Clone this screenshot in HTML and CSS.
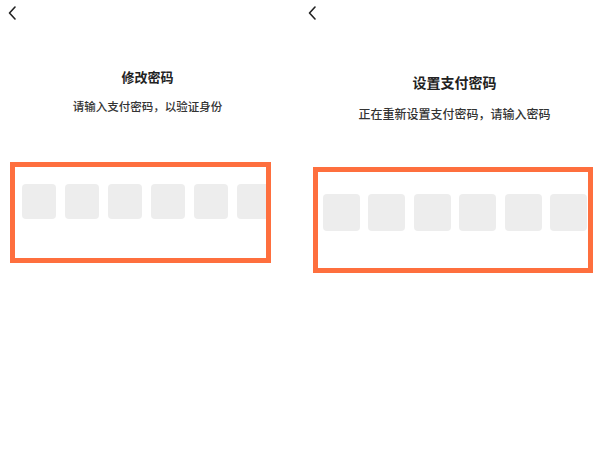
FILE: index.html
```html
<!DOCTYPE html>
<html lang="zh-CN">
<head>
<meta charset="utf-8">
<title>支付密码</title>
<link rel="stylesheet" href="styles.css">
</head>
<body>
<div class="screens">
  <section class="panel panel-verify">
    <svg class="back" width="10" height="14" viewBox="0 0 10 14"><path d="M7 1 L1.5 7 L7 13" fill="none" stroke="#222" stroke-width="1.6" stroke-linecap="round" stroke-linejoin="round"/></svg>
    <div class="head">
      <h1 class="title">修改密码</h1>
      <p class="sub">请输入支付密码，以验证身份</p>
    </div>
    <div class="box">
      <div class="cells">
        <span class="cell"></span><span class="cell"></span><span class="cell"></span><span class="cell"></span><span class="cell"></span><span class="cell"></span>
      </div>
    </div>
  </section>
  <section class="panel panel-reset">
    <svg class="back" width="10" height="14" viewBox="0 0 10 14"><path d="M7 1 L1.5 7 L7 13" fill="none" stroke="#222" stroke-width="1.6" stroke-linecap="round" stroke-linejoin="round"/></svg>
    <div class="head">
      <h1 class="title">设置支付密码</h1>
      <p class="sub">正在重新设置支付密码，请输入密码</p>
    </div>
    <div class="box">
      <div class="cells">
        <span class="cell"></span><span class="cell"></span><span class="cell"></span><span class="cell"></span><span class="cell"></span><span class="cell"></span>
      </div>
    </div>
  </section>
</div>
</body>
</html>
```
FILE: styles.css
```css
html, body {
  margin: 0;
  padding: 0;
  background: #fff;
  font-family: "Noto Sans CJK SC", "Noto Sans", sans-serif;
}
.screens {
  display: flex;
  width: 600px;
  height: 450px;
}
.panel {
  width: 300px;
  flex-shrink: 0;
  display: flex;
  flex-direction: column;
}
.back {
  display: block;
  margin: 6px 0 0 8px;
}
.head {
  text-align: center;
}
.title {
  margin: 0;
  font-weight: 700;
  color: #222;
}
.sub {
  margin: 0;
  font-weight: 500;
  color: #333;
}
.box {
  box-sizing: border-box;
  border: 5px solid #fe6f3e;
  overflow: hidden;
}
.cells {
  display: flex;
}
.cell {
  flex-shrink: 0;
  background: #ededed;
  border-radius: 4px;
}

/* left screen */
.panel-verify .head { width: 295px; }
.panel-verify .title {
  margin-top: 48px;
  font-size: 13px;
  line-height: 18px;
}
.panel-verify .sub {
  margin-top: 12px;
  font-size: 11.5px;
  line-height: 16px;
}
.panel-verify .box {
  margin: 48px 0 0 10px;
  width: 261px;
  height: 101px;
  padding: 17px 0 0 6.7px;
}
.panel-verify .cells { gap: 8.3px; }
.panel-verify .cell {
  width: 34.7px;
  height: 35px;
}

/* right screen */
.panel-reset .head { width: 291px; margin-left: 9px; }
.panel-reset .title {
  margin-top: 52px;
  font-size: 14px;
  line-height: 20px;
}
.panel-reset .sub {
  margin-top: 13.5px;
  font-size: 12px;
  line-height: 16px;
}
.panel-reset .box {
  margin: 45.2px 0 0 12.7px;
  width: 280.3px;
  height: 106px;
  padding: 22.6px 0 0 5px;
}
.panel-reset .cells { gap: 8.5px; }
.panel-reset .cell {
  width: 37px;
  height: 37px;
}
```
